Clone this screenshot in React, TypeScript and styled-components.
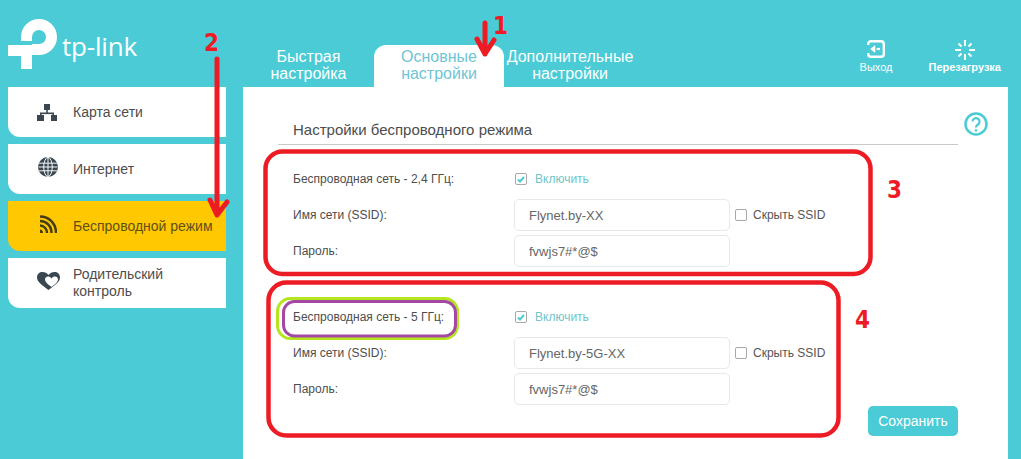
import styled, { createGlobalStyle } from "styled-components";

const GlobalStyle = createGlobalStyle`
  html, body {
    margin: 0;
    padding: 0;
    background: #4acbd6;
  }
  body {
    font-family: "Liberation Sans", Arial, sans-serif;
  }
`;

const Page = styled.div`
  position: relative;
  width: 1021px;
  height: 459px;
  overflow: hidden;
  background: #4acbd6;
  display: flex;
  flex-direction: column;
`;

const Header = styled.header`
  height: 87px;
  display: flex;
  align-items: flex-end;
`;

const LogoBox = styled.div`
  width: 243px;
  height: 87px;
  box-sizing: border-box;
  padding: 19px 0 0 8px;
  display: flex;
  align-items: flex-start;
  color: #fff;
`;

const LogoText = styled.span`
  font-family: "Open Sans", sans-serif;
  font-size: 26px;
  line-height: 30px;
  margin: 12px 0 0 5px;
  letter-spacing: -0.2px;
  color: #fff;
`;

const Tabs = styled.nav`
  display: flex;
  align-items: flex-end;
`;

const Tab = styled.div<{ $active?: boolean; $width: number }>`
  width: ${(p) => p.$width}px;
  height: 42px;
  padding-top: 3px;
  box-sizing: border-box;
  text-align: center;
  font-size: 16px;
  line-height: 17px;
  color: ${(p) => (p.$active ? "#6fc5d6" : "#fff")};
  background: ${(p) => (p.$active ? "#fff" : "transparent")};
  border-radius: 12px 12px 0 0;
`;

const Actions = styled.div`
  margin-left: auto;
  height: 87px;
  box-sizing: border-box;
  padding: 40px 20px 0 0;
  display: flex;
  gap: 36px;
  color: #fff;
`;

const Action = styled.div<{ $bold?: boolean }>`
  display: flex;
  flex-direction: column;
  align-items: center;
  gap: 1px;
  font-size: 11px;
  line-height: 12px;
  font-weight: ${(p) => (p.$bold ? 700 : 400)};
`;

const ActionIcon = styled.span`
  height: 20px;
  display: flex;
  align-items: flex-start;
`;

const Body = styled.div`
  flex: 1;
  display: flex;
  min-height: 0;
`;

const Sidebar = styled.aside`
  width: 243px;
  box-sizing: border-box;
  padding-left: 8px;
  display: flex;
  flex-direction: column;
  gap: 7px;
`;

const MenuItem = styled.div<{ $active?: boolean }>`
  width: 218px;
  height: 50px;
  box-sizing: border-box;
  padding-left: 29px;
  display: flex;
  align-items: center;
  border-radius: 0 0 0 12px;
  font-size: 14px;
  line-height: 17px;
  background: ${(p) => (p.$active ? "#ffc800" : "#fff")};
  color: ${(p) => (p.$active ? "#5f5018" : "#4d4d4d")};
`;

const MenuIcon = styled.span<{ $lift?: boolean }>`
  width: 36px;
  flex: none;
  display: flex;
  margin-top: ${(p) => (p.$lift ? "-4px" : "0")};
`;

const Panel = styled.main`
  width: 765px;
  background: #fff;
  box-sizing: border-box;
  padding: 33px 0 0 35px;
`;

const TitleRow = styled.div`
  display: flex;
  align-items: flex-start;
  margin-bottom: 18px;
`;

const Title = styled.h1`
  width: 680px;
  height: 25px;
  box-sizing: border-box;
  margin: 0;
  padding-left: 15px;
  border-bottom: 1px solid #c9c9c9;
  font-size: 15px;
  font-weight: 400;
  line-height: 20px;
  color: #4d4d4d;
`;

const HelpIcon = styled.svg`
  margin: -8px 0 0 6px;
  flex: none;
`;

const Sections = styled.div`
  display: flex;
  flex-direction: column;
  gap: 34px;
`;

const Section = styled.section`
  display: grid;
  grid-template-columns: 221px 216px auto;
  grid-template-rows: repeat(3, 32px);
  row-gap: 4px;
  align-items: center;
  padding-left: 15px;
  width: 560px;
  font-size: 12px;
  color: #4d4d4d;
`;

const CheckLine = styled.label<{ $accent?: boolean }>`
  display: flex;
  align-items: center;
  gap: 8px;
  color: ${(p) => (p.$accent ? "#6fc5c9" : "#555")};
`;

const HideLine = styled(CheckLine)`
  margin-left: 4px;
  gap: 6px;
`;

const Box = styled.span`
  width: 12px;
  height: 12px;
  margin-left: 1px;
  box-sizing: border-box;
  border: 1px solid #a8a8a8;
  border-radius: 2px;
  display: flex;
  align-items: center;
  justify-content: center;
`;

const Field = styled.input`
  width: 216px;
  height: 32px;
  box-sizing: border-box;
  padding: 0 14px;
  border: 1px solid #e8e8e8;
  border-radius: 5px;
  outline: none;
  background: #fff;
  font-family: "Liberation Sans", Arial, sans-serif;
  font-size: 13px;
  color: #666;
`;

const Footer = styled.div`
  width: 680px;
  margin-top: 1px;
  display: flex;
  justify-content: flex-end;
`;

const SaveButton = styled.button`
  width: 90px;
  height: 30px;
  border: none;
  border-radius: 5px;
  background: #4acbd6;
  color: #fff;
  font-family: "Liberation Sans", Arial, sans-serif;
  font-size: 14px;
  padding: 0;
`;

const Overlay = styled.svg`
  position: absolute;
  left: 0;
  top: 0;
  pointer-events: none;
`;

const Mark = styled.span<{ $x: number; $y: number }>`
  position: absolute;
  left: ${(p) => p.$x}px;
  top: ${(p) => p.$y}px;
  font-family: "DejaVu Sans", "Liberation Sans", sans-serif;
  font-stretch: condensed;
  font-size: 24px;
  line-height: 25px;
  font-weight: 700;
  color: #ed1c24;
`;

function TpLogo() {
  return (
    <svg width="49" height="50" viewBox="0 0 49 50" fill="none">
      <path d="M0 26h24v24H13V37H0z" fill="#fff" />
      <path
        d="M18.500 22v-4A12.500 12.500 0 1 1 31 30.500H24"
        stroke="#fff"
        strokeWidth="11"
      />
    </svg>
  );
}

function MapIcon() {
  return (
    <svg width="20" height="17" viewBox="0 0 20 17" fill="#3a4750">
      <rect x="7" y="0" width="6" height="6" />
      <rect x="9.200" y="5" width="1.600" height="5" />
      <rect x="3" y="8.500" width="14" height="1.600" />
      <rect x="0" y="11" width="7" height="6" />
      <rect x="14" y="11" width="6" height="6" />
      <rect x="3" y="9" width="1.600" height="3" />
      <rect x="15.400" y="9" width="1.600" height="3" />
    </svg>
  );
}

function GlobeIcon() {
  return (
    <svg width="20" height="20" viewBox="0 0 21 21" fill="none" style={{ marginLeft: 1 }}>
      <circle cx="10.500" cy="10.500" r="10.500" fill="#3a4750" />
      <g stroke="#fff" strokeWidth="1">
        <ellipse cx="10.500" cy="10.500" rx="4.500" ry="10" />
        <path d="M10.500 0v21M1 6.500h19M0.500 10.500h20M1 14.500h19" />
      </g>
    </svg>
  );
}

function WifiIcon() {
  return (
    <svg
      width="17"
      height="18"
      viewBox="0 0 17 18"
      fill="none"
      stroke="#453d18"
      strokeWidth="2.500"
      style={{ marginLeft: 3 }}
    >
      <path d="M0 1.500c9 0 16 7 16 16.500M0 6c6.500 0 11.500 5 11.500 12M0 10.500c4 0 7 3.500 7 7.500" />
      <path d="M0 14.500c2 0 3 1.500 3 3.500H0z" fill="#453d18" stroke="none" />
    </svg>
  );
}

function HeartIcon() {
  return (
    <svg width="23" height="18" viewBox="0 0 23 18">
      <path
        d="M11.500 18C5 13 0 10 0 5.500 0 2 2.500 0 5.500 0c2.500 0 4.500 1 6 3 1.500-2 3.500-3 6-3 3 0 5.500 2 5.500 5.500 0 4.500-5 7.500-11.500 12.500z"
        fill="#3a4750"
      />
      <path
        d="M14.500 15c-2-1.500-6.500-4.500-6.500-7.500C8 5.500 9.500 4.500 11 4.500c1.300 0 2.500.6 3.500 2 1-1.400 2.200-2 3.500-2 1.500 0 3 1 3 3 0 3-4.500 6-6.500 7.500z"
        fill="#fff"
      />
    </svg>
  );
}

function ExitIcon() {
  return (
    <svg width="18" height="18" viewBox="0 0 18 18" fill="none" stroke="#fff">
      <path
        d="M1.200 5V4A2.800 2.800 0 0 1 4 1.200h10A2.800 2.800 0 0 1 16.800 4v10a2.800 2.800 0 0 1-2.800 2.800H4A2.800 2.800 0 0 1 1.200 14v-1"
        strokeWidth="2.400"
      />
      <path d="M8 5.500L3.500 9 8 12.500z" fill="#fff" strokeWidth="0.500" />
      <path d="M9.500 9h3.500" strokeWidth="2.200" />
    </svg>
  );
}

function RebootIcon() {
  return (
    <svg width="20" height="20" viewBox="0 0 20 20" stroke="#fff" strokeWidth="2">
      <path d="M10 0v6M10 14v6M0 10h6M14 10h6M3.500 3.500l3 3M13.500 13.500l3 3M16.500 3.500l-3 3M6.500 13.500l-3 3" />
    </svg>
  );
}

function HelpGlyph() {
  return (
    <HelpIcon width="24" height="24" viewBox="0 0 24 24" fill="none" stroke="#4acbd6">
      <circle cx="12" cy="12" r="10.500" strokeWidth="2.500" />
      <path d="M8.500 9.500a3.500 3.500 0 1 1 5.500 3c-1.300.9-2 1.500-2 3" strokeWidth="2.200" />
      <circle cx="12" cy="18.500" r="1.300" fill="#4acbd6" stroke="none" />
    </HelpIcon>
  );
}

function CheckBox({ checked }: { checked?: boolean }) {
  return (
    <Box>
      {checked && (
        <svg width="8" height="7" viewBox="0 0 8 7" fill="none" stroke="#4acbd6" strokeWidth="2">
          <path d="M1 3.500l2 2L7 1" />
        </svg>
      )}
    </Box>
  );
}

function WirelessSection({ band, ssid }: { band: string; ssid: string }) {
  return (
    <Section>
      <span>Беспроводная сеть - {band}:</span>
      <CheckLine $accent>
        <CheckBox checked />
        Включить
      </CheckLine>
      <span />
      <span>Имя сети (SSID):</span>
      <Field readOnly value={ssid} />
      <HideLine>
        <CheckBox />
        Скрыть SSID
      </HideLine>
      <span>Пароль:</span>
      <Field readOnly value="fvwjs7#*@$" />
    </Section>
  );
}

export default function App() {
  return (
    <Page>
      <GlobalStyle />
      <Header>
        <LogoBox>
          <TpLogo />
          <LogoText>tp-link</LogoText>
        </LogoBox>
        <Tabs>
          <Tab $width={131}>
            Быстрая
            <br />
            настройка
          </Tab>
          <Tab $active $width={130}>
            Основные
            <br />
            настройки
          </Tab>
          <Tab $width={132}>
            Дополнительные
            <br />
            настройки
          </Tab>
        </Tabs>
        <Actions>
          <Action>
            <ActionIcon>
              <ExitIcon />
            </ActionIcon>
            Выход
          </Action>
          <Action $bold>
            <ActionIcon>
              <RebootIcon />
            </ActionIcon>
            Перезагрузка
          </Action>
        </Actions>
      </Header>
      <Body>
        <Sidebar>
          <MenuItem>
            <MenuIcon>
              <MapIcon />
            </MenuIcon>
            Карта сети
          </MenuItem>
          <MenuItem>
            <MenuIcon $lift>
              <GlobeIcon />
            </MenuIcon>
            Интернет
          </MenuItem>
          <MenuItem $active>
            <MenuIcon $lift>
              <WifiIcon />
            </MenuIcon>
            Беспроводной режим
          </MenuItem>
          <MenuItem>
            <MenuIcon $lift>
              <HeartIcon />
            </MenuIcon>
            Родительский
            <br />
            контроль
          </MenuItem>
        </Sidebar>
        <Panel>
          <TitleRow>
            <Title>Настройки беспроводного режима</Title>
            <HelpGlyph />
          </TitleRow>
          <Sections>
            <WirelessSection band="2,4 ГГц" ssid="Flynet.by-XX" />
            <WirelessSection band="5 ГГц" ssid="Flynet.by-5G-XX" />
          </Sections>
          <Footer>
            <SaveButton>Сохранить</SaveButton>
          </Footer>
        </Panel>
      </Body>

      {/* hand-drawn annotations on top of the screenshot */}
      <Overlay width="1021" height="459" viewBox="0 0 1021 459" fill="none">
        <rect x="265.500" y="151.500" width="605" height="122.500" rx="17" stroke="#ed1c24" strokeWidth="4.500" />
        <rect x="268.500" y="282.500" width="570" height="153" rx="18" stroke="#ed1c24" strokeWidth="4.500" />
        <rect x="277.500" y="298.500" width="180" height="40" rx="13" stroke="#b5e61d" strokeWidth="3" />
        <rect x="283.500" y="301.500" width="172" height="34.500" rx="11" stroke="#a349a4" strokeWidth="3" />
        <path
          d="M485 23v31M477 39l8 15 9-14M217 59v155M210 200l7 15 10-13"
          stroke="#ed1c24"
          strokeWidth="5"
          strokeLinecap="round"
          strokeLinejoin="round"
        />
      </Overlay>
      <Mark $x={493} $y={14}>1</Mark>
      <Mark $x={204} $y={31}>2</Mark>
      <Mark $x={887} $y={178}>3</Mark>
      <Mark $x={855} $y={308}>4</Mark>
    </Page>
  );
}
